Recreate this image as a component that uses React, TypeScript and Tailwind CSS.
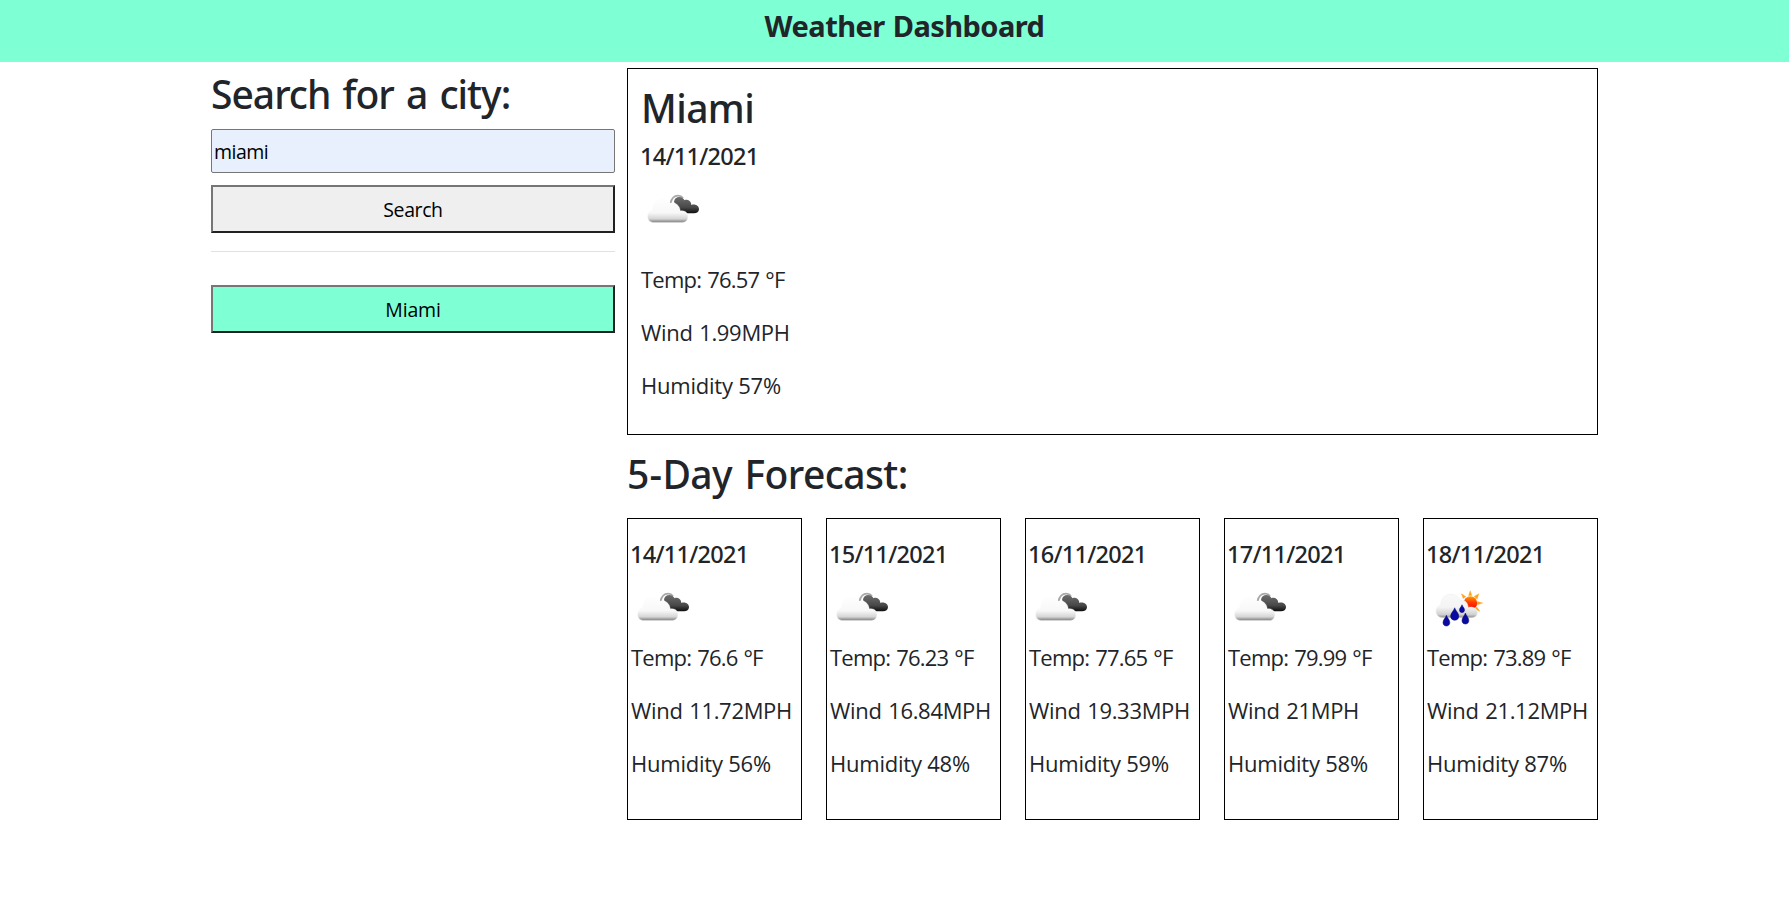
type Sky = "clouds" | "rain";

interface Reading {
  date: string;
  sky: Sky;
  temp: string;
  wind: string;
  humidity: string;
}

const today: Reading = { date: "14/11/2021", sky: "clouds", temp: "76.57", wind: "1.99", humidity: "57" };

const forecast: Reading[] = [
  { date: "14/11/2021", sky: "clouds", temp: "76.6", wind: "11.72", humidity: "56" },
  { date: "15/11/2021", sky: "clouds", temp: "76.23", wind: "16.84", humidity: "48" },
  { date: "16/11/2021", sky: "clouds", temp: "77.65", wind: "19.33", humidity: "59" },
  { date: "17/11/2021", sky: "clouds", temp: "79.99", wind: "21", humidity: "58" },
  { date: "18/11/2021", sky: "rain", temp: "73.89", wind: "21.12", humidity: "87" },
];

function CloudsIcon() {
  return (
    <svg viewBox="0 0 60 60" className="mt-[8px] block h-[60px] w-[60px]" aria-hidden="true">
      <defs>
        <linearGradient id="whiteCloud" gradientUnits="userSpaceOnUse" x1="0" y1="19" x2="0" y2="43.5">
          <stop offset="0" stopColor="#fefefe" />
          <stop offset="0.6" stopColor="#f8f8f8" />
          <stop offset="0.85" stopColor="#d6d6d6" />
          <stop offset="1" stopColor="#787878" />
        </linearGradient>
        <linearGradient id="darkCloud" gradientUnits="userSpaceOnUse" x1="0" y1="17" x2="0" y2="34.5">
          <stop offset="0" stopColor="#707070" />
          <stop offset="0.65" stopColor="#484848" />
          <stop offset="1" stopColor="#0c0c0c" />
        </linearGradient>
      </defs>
      <path d="M29.5 24.5C30.5 19.5 33 16.7 37 16.7C39.5 16.7 41 17.6 42 19" fill="none" stroke="#a8a8a8" strokeWidth="1.8" />
      <path
        d="M33 23C33.2 19.8 35.5 18 38.3 18C40.8 18 42.6 19.3 43.5 21.2C46.5 20 49.8 21.8 50.2 25C50.3 25.3 50.2 25.8 50.2 25.9C54.5 24.4 58.2 27 58 30.2C57.8 32.8 56 34.3 53 34.3H41Z"
        fill="url(#darkCloud)"
      />
      <path
        d="M12 43.4C8.5 43.2 6.5 40.5 6.5 37.2C6.5 33.6 8.5 31.3 11.6 30.6C11.2 24.5 15.5 19.7 21 19.7C24.6 19.7 27.4 21.4 29 24.3C34.5 22.8 38.8 26.4 39.2 32C44 31 47.2 34.2 47 38C46.8 41.2 44.8 43.4 41.5 43.4Z"
        fill="url(#whiteCloud)"
        stroke="#ffffff"
        strokeOpacity="0.5"
        strokeWidth="0.8"
      />
    </svg>
  );
}

function RainIcon() {
  return (
    <svg viewBox="0 0 60 60" className="mt-[8px] block h-[60px] w-[60px]" aria-hidden="true">
      <defs>
        <linearGradient id="rainCloud" gradientUnits="userSpaceOnUse" x1="0" y1="17" x2="0" y2="41">
          <stop offset="0" stopColor="#f9f9f9" />
          <stop offset="0.55" stopColor="#f4f4f4" />
          <stop offset="0.85" stopColor="#d2d2d2" />
          <stop offset="1" stopColor="#858585" />
        </linearGradient>
        <linearGradient id="sun" x1="0" y1="0" x2="0" y2="1">
          <stop offset="0" stopColor="#ffa000" />
          <stop offset="0.45" stopColor="#ff3c00" />
          <stop offset="1" stopColor="#f80000" />
        </linearGradient>
      </defs>
      <path
        d="M41.6 18.5L43.2 13.8L44.8 18.5ZM47.2 19.5L51.8 16.8L50.2 22ZM50.3 24.5L55.6 26L50.3 27.8ZM49.8 30L52.8 34.2L47.6 32ZM38.7 19.6L34.4 16.8L36.2 21.5Z"
        fill="#ffa21a"
        stroke="#ffa21a"
        strokeWidth="0.4"
      />
      <circle cx="43.4" cy="26" r="6.8" fill="url(#sun)" />
      <path
        d="M15.5 40.7C11.5 40.5 9 37.6 9 34.2C9 30.8 11 28.6 13.9 28C13.6 21.8 18 17.2 23.6 17.2C28.5 17.2 31.6 19.6 32.8 23.2C37.5 22.4 40.8 25.4 41.2 30.4C46.5 29.2 50.4 31.8 50.4 35.2C50.4 38.5 48 40.7 44.5 40.7Z"
        fill="url(#rainCloud)"
        stroke="#ececec"
        strokeWidth="0.5"
      />
      <g fill="#0a0aa0" stroke="#05056e" strokeWidth="0.5">
        <path d="M19.4 38.3C20.2 41 22.8 42.8 22.8 45.5C22.8 47.6 21.4 49 19.4 49C17.4 49 16 47.6 16 45.5C16 42.8 18.6 41 19.4 38.3Z" />
        <path d="M27.7 30.8C28.6 34 31.8 36 31.8 39.2C31.8 41.6 30.1 43.2 27.7 43.2C25.3 43.2 23.6 41.6 23.6 39.2C23.6 36 26.8 34 27.7 30.8Z" />
        <path d="M35 27.8C35.6 29.8 37.5 31 37.5 33C37.5 34.6 36.4 35.6 35 35.6C33.6 35.6 32.5 34.6 32.5 33C32.5 31 34.4 29.8 35 27.8Z" />
        <path d="M38.4 36C39.2 38.8 41.8 40.6 41.8 43.4C41.8 45.6 40.4 47 38.4 47C36.4 47 35 45.6 35 43.4C35 40.6 37.6 38.8 38.4 36Z" />
      </g>
    </svg>
  );
}

function ReadingDate({ date }: { date: string }) {
  return (
    <h3 className="-ml-px pt-px font-['Noto_Sans',sans-serif] text-[23.5px] leading-[29px] font-medium tracking-[-0.72px]">
      {date}
    </h3>
  );
}

function ReadingDetails({ reading }: { reading: Reading }) {
  return (
    <div className="flex flex-col gap-5 text-[22px] leading-[33px] whitespace-nowrap">
      <p className="tracking-[-0.78px] [word-spacing:1px]">Temp: {reading.temp} °F</p>
      <p className="tracking-[-0.32px] [word-spacing:1.2px]">Wind {reading.wind}MPH</p>
      <p className="tracking-[-0.22px]">Humidity {reading.humidity}%</p>
    </div>
  );
}

function SkyIcon({ sky }: { sky: Sky }) {
  return sky === "rain" ? <RainIcon /> : <CloudsIcon />;
}

export default function App() {
  return (
    <div className="min-h-screen bg-white font-['Open_Sans',sans-serif] text-[#212529]">
      <header className="flex h-[62px] justify-center bg-[#7fffd4] pl-5">
        <h1 className="pt-px font-['Noto_Sans',sans-serif] text-[29px] leading-[49px] font-bold tracking-[-0.54px] [word-spacing:1px]">
          Weather Dashboard
        </h1>
      </header>

      <main className="ml-[211px] flex w-[1387px] items-start gap-3">
        <aside className="flex w-[404px] flex-col pt-2">
          <h2 className="font-['Noto_Sans',sans-serif] text-[39px] leading-[48px] font-medium tracking-[-1px] [word-spacing:3px]">
            Search for a city:
          </h2>
          <input
            type="text"
            aria-label="City"
            defaultValue="miami"
            className="mt-[11px] h-11 rounded-[2px] border border-[#767676] bg-[#e8f0fe] px-0.5 pt-px text-[19.5px] tracking-[-0.5px] text-black outline-none"
          />
          <button className="mt-3 h-12 border-2 border-t-[#767676] border-r-[#212121] border-b-[#212121] border-l-[#767676] bg-[#efefef] pt-px text-[19.5px] tracking-[-0.4px] text-black">
            Search
          </button>
          <hr className="mt-[18px] border-t border-[#e0e1e1]" />
          <button className="mt-[33px] h-12 border-2 border-t-[#767676] border-r-[#212121] border-b-[#212121] border-l-[#767676] bg-[#7fffd4] pt-px text-[19.5px] tracking-[-0.2px] text-black">
            Miami
          </button>
        </aside>

        <div className="w-[971px] pt-1.5">
          <section className="h-[367px] border border-black px-[13px] pt-[15px]">
            <h2 className="mb-[9px] font-['Noto_Sans',sans-serif] text-[39px] leading-[48px] font-medium tracking-[-0.6px]">
              Miami
            </h2>
            <ReadingDate date={today.date} />
            <SkyIcon sky={today.sky} />
            <div className="mt-6">
              <ReadingDetails reading={today} />
            </div>
          </section>

          <h2 className="mt-[15px] font-['Noto_Sans',sans-serif] text-[39px] leading-[48px] font-medium tracking-[-0.6px] [word-spacing:3px]">
            <span className="tracking-[0.3px]">5-</span>Day Forecast:
          </h2>
          <section className="mt-5 grid grid-cols-5 gap-6">
            {forecast.map((day) => (
              <article key={day.date} className="h-[302px] border border-black px-[3px] pt-5">
                <ReadingDate date={day.date} />
                <SkyIcon sky={day.sky} />
                <div className="mt-1">
                  <ReadingDetails reading={day} />
                </div>
              </article>
            ))}
          </section>
        </div>
      </main>
    </div>
  );
}
